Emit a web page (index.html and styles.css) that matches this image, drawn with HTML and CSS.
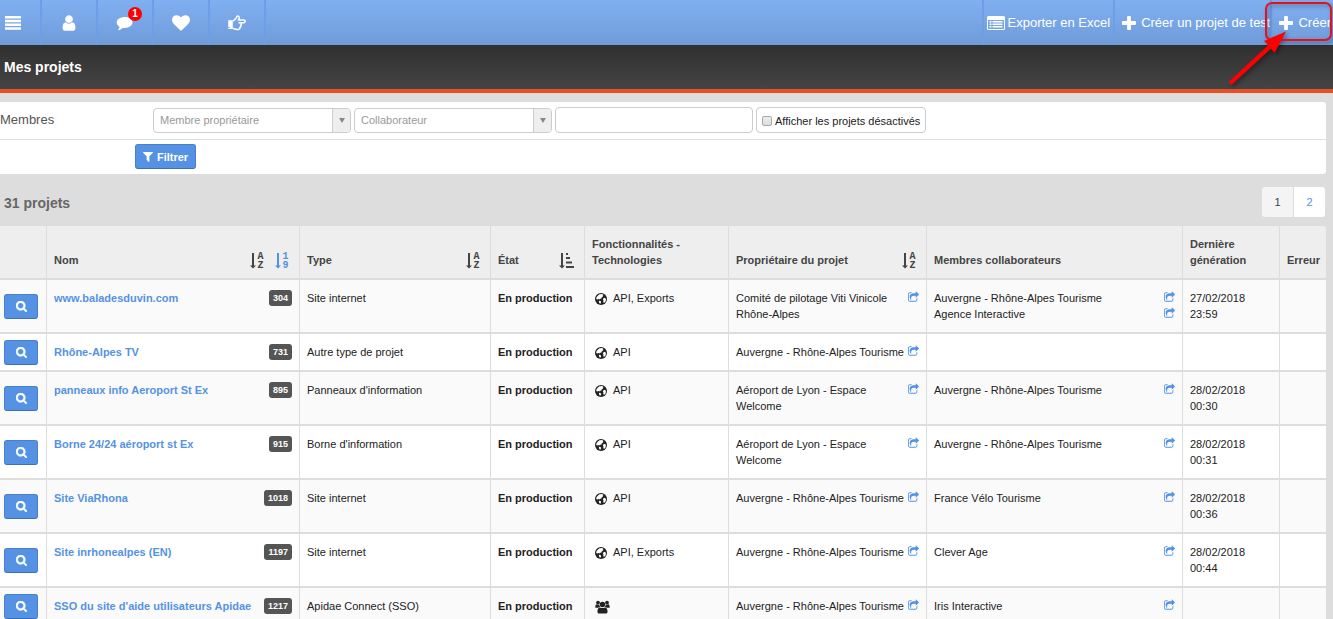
FILE: index.html
```html
<!DOCTYPE html>
<html lang="fr">
<head>
<meta charset="UTF-8">
<meta name="viewport" content="width=device-width, initial-scale=1">
<title>Mes projets</title>
<link rel="stylesheet" href="styles.css">
</head>
<body>
  <!-- Icon set -->
  <svg class="sprite" aria-hidden="true">
    <symbol id="i-menu" viewBox="0 0 16 14"><path d="M0 0h16v2.500H0zM0 3.700h16v2.500H0zM0 7.500h16V10H0zM0 11.300h16v2.500H0z"/></symbol>
    <symbol id="i-user" viewBox="0 0 1792 1792"><path d="M1536 1399q0 109-62.500 187t-150.500 78h-854q-88 0-150.500-78t-62.500-187q0-85 8.500-160.500t31.500-152 58.500-131 94-89 134.500-34.500q131 128 313 128t313-128q76 0 134.500 34.500t94 89 58.500 131 31.500 152 8.500 160.500zm-256-887q0 159-112.500 271.500t-271.500 112.500-271.500-112.500-112.500-271.500 112.500-271.500 271.500-112.500 271.500 112.500 112.500 271.500z"/></symbol>
    <symbol id="i-comment" viewBox="0 0 18 18"><path d="M9 3c4.600 0 7.500 2.300 7.500 5.300s-3 5.600-7.500 5.600c-.8 0-1.500-.1-2.200-.2-1.400 1.300-2.900 2.200-5.100 2.500 1-1 1.600-2 1.800-3.500C1.600 11.500.700 10.200.700 8.500.700 5.300 4.400 3 9 3z"/></symbol>
    <symbol id="i-heart" viewBox="0 0 1792 1792"><path d="M896 1664q-26 0-44-18l-624-602q-10-8-27.500-26t-55.500-65.500-68-97.500-53.500-121-23.500-138q0-220 127-344t351-124q62 0 126.500 21.500t120 58 95.500 68.500 76 68q36-36 76-68t95.500-68.500 120-58 126.500-21.500q224 0 351 124t127 344q0 221-229 450l-623 600q-18 18-44 18z"/></symbol>
    <symbol id="i-hand" viewBox="0 0 18 16"><path d="M.3 5.200h4.500v8.900H.3zM1.700 12.400a.6.600 0 1 0 0 .1z" fill-rule="evenodd"/><path d="M4.800 5.900c1.200 0 2.400-1.700 3.300-2.800.6-.8.500-2.200 1.500-2.200 1.700 0 2.100 1.800 1 4.100h5.200c1.900 0 1.900 2.700 0 2.700h-3c1 .8.900 2-.1 2.500.5.900.1 1.900-.8 2.300.3 1.300-.5 2-1.900 2-2.200 0-3.300-1.100-5.200-1.100M12.500 7.700h-2" fill="none" stroke="currentColor" stroke-width="1.500"/></symbol>
    <symbol id="i-list" viewBox="0 0 18 14"><path fill-rule="evenodd" d="M1.500 0h15Q18 0 18 1.500v11q0 1.500-1.500 1.500h-15Q0 14 0 12.500v-11Q0 0 1.500 0zM1 4v8.500q0 .5.500.5h15q.5 0 .5-.5V4z"/><path d="M2.500 5h2v1.500h-2zM5.500 5h10v1.500h-10zM2.500 7.500h2V9h-2zM5.500 7.500h10V9h-10zM2.500 10h2v1.500h-2zM5.500 10h10v1.500h-10z"/></symbol>
    <symbol id="i-plus" viewBox="192 128 1408 1408"><path d="M1600 736v192q0 40-28 68t-68 28h-416v416q0 40-28 68t-68 28h-192q-40 0-68-28t-28-68v-416h-416q-40 0-68-28t-28-68v-192q0-40 28-68t68-28h416v-416q0-40 28-68t68-28h192q40 0 68 28t28 68v416h416q40 0 68 28t28 68z"/></symbol>
    <symbol id="i-filter" viewBox="192 256 1408 1408"><path d="M1595 295q17 41-14 70l-493 493v742q0 42-39 59-13 5-25 5-27 0-45-19l-256-256q-19-19-19-45v-486l-493-493q-31-29-14-70 17-39 59-39h1280q42 0 59 39z"/></symbol>
    <symbol id="i-search" viewBox="64 128 1664 1664"><path stroke="currentColor" stroke-width="80" d="M1216 832q0-185-131.500-316.500t-316.500-131.500-316.500 131.500-131.500 316.500 131.500 316.500 316.500 131.500 316.500-131.500 131.500-316.500zm512 832q0 52-38 90t-90 38q-54 0-90-38l-343-342q-179 124-399 124-143 0-273.500-55.500t-225-150-150-225-55.500-273.500 55.500-273.500 150-225 225-150 273.500-55.500 273.500 55.500 225 150 150 225 55.500 273.500q0 220-124 399l343 343q37 37 37 90z"/></symbol>
    <symbol id="i-share" viewBox="64 64 1664 1536"><path d="M1472 989v259q0 119-84.500 203.500t-203.500 84.500h-832q-119 0-203.500-84.500t-84.500-203.500v-832q0-119 84.500-203.500t203.500-84.500h255q13 0 22.500 9.500t9.500 22.500q0 27-26 32-77 26-133 60-10 4-16 4h-112q-66 0-113 47t-47 113v832q0 66 47 113t113 47h832q66 0 113-47t47-113v-214q0-19 18-29 28-13 54-37 16-16 35-8 21 9 21 29zm237-496l-384 384q-18 19-45 19-12 0-25-5-39-17-39-59v-192h-160q-323 0-438 131-119 137-74 473 3 23-20 34-8 2-12 2-16 0-26-13-10-14-21-31t-39.500-68.500-49.500-99.500-38.500-114-17.500-122q0-49 3.500-91t14-90 28-88 47-81.500 68.500-74 94.500-61.500 124.500-48.500 159.500-30.500 196.500-11h160v-192q0-42 39-59 13-5 25-5 26 0 45 19l384 384q19 19 19 45t-19 45z"/></symbol>
    <symbol id="i-globe" viewBox="0 0 12 12"><circle cx="6" cy="6" r="6"/><path fill="#fff" d="M4.500 1.300 7.300 1l1.200 1.200-.8.600.2 1-1.300.6-.4 1.300-1.300.1-.4.800-1.100-.6-.9.500L1.200 6l.4-2L3 2.400zM9 4.700l1.500.5.500 1.500-.6 2-1.500 1.300-.7-1.500.3-1.300-.7-1zM3.800 7.700l1.700.3.700 1-.8 1.800-1.200-.7z"/></symbol>
    <symbol id="i-users" viewBox="0 0 16 14"><circle cx="3.200" cy="2.300" r="2"/><circle cx="12.800" cy="2.300" r="2"/><circle cx="8" cy="4.400" r="2.900"/><path d="M.3 7.500C.3 5.500.8 4 1.800 4c.8.600 2 .6 2.700.2.100 1.200.5 2 1.100 2.700-1 0-1.800.4-2.400 1H1.500C.8 7.900.3 7.900.3 7.500zM15.700 7.500c0-2-.5-3.500-1.500-3.500-.8.600-2 .6-2.700.2-.1 1.200-.5 2-1.100 2.700 1 0 1.800.4 2.400 1h1.700c.7 0 1.200 0 1.200-.4zM5.300 7.400c1.600 1 3.800 1 5.400 0 1.800 0 2.700 1.800 2.700 4.600 0 1.200-.8 1.900-1.900 1.900h-7c-1.100 0-1.900-.7-1.900-1.900 0-2.800.9-4.600 2.700-4.600z"/></symbol>
    <symbol id="i-down" viewBox="0 0 6 18"><path d="M2 1h2v12.500h2l-3 3-3-3h2z"/></symbol>
    <symbol id="i-amount" viewBox="0 0 15 18"><path d="M2 1h2v12.500h2l-3 3-3-3h2zM7 1h2v2H7zM7 5h4v2H7zM7 9.500h6v2H7zM7 14h8v2H7z"/></symbol>
  </svg>

  <header class="topbar">
    <nav class="nav-left">
      <button class="nav-icon nav-menu" aria-label="Menu"><svg class="ico-menu"><use href="#i-menu"/></svg></button>
      <a class="nav-icon" href="#" aria-label="Profil"><svg class="ico-nav"><use href="#i-user"/></svg></a>
      <a class="nav-icon" href="#" aria-label="Messages"><svg class="ico-nav"><use href="#i-comment"/></svg><span class="count">1</span></a>
      <a class="nav-icon" href="#" aria-label="Favoris"><svg class="ico-nav"><use href="#i-heart"/></svg></a>
      <a class="nav-icon" href="#" aria-label="Aide"><svg class="ico-nav"><use href="#i-hand"/></svg></a>
    </nav>
    <nav class="nav-right">
      <a class="action" href="#"><svg class="ico-list"><use href="#i-list"/></svg>Exporter en Excel</a>
      <a class="action action-test" href="#"><svg class="ico-plus"><use href="#i-plus"/></svg>Créer un projet de test</a>
      <a class="action action-create" href="#"><svg class="ico-plus"><use href="#i-plus"/></svg>Créer</a>
    </nav>
    <!-- Arrow pointing at the create action -->
    <svg class="callout" viewBox="0 0 108 90" aria-hidden="true">
      <rect x="41" y="3" width="65" height="37" rx="6" fill="none" stroke="#e8101c" stroke-width="2"/>
      <path d="M6.300 85 45.800 48.800l3.900 4L61 31.500 39 41l4.200 4.300L3.500 82z" fill="#f00"/>
    </svg>
  </header>

  <div class="title-bar"><h1>Mes projets</h1></div>

  <main>
    <form class="filters">
      <div class="filter-row">
        <span class="filter-label">Membres</span>
        <div class="fields">
          <div class="select">
            <select aria-label="Membre propriétaire"><option>Membre propriétaire</option></select>
          </div>
          <div class="select">
            <select aria-label="Collaborateur"><option>Collaborateur</option></select>
          </div>
          <input class="text" type="text" aria-label="Recherche">
          <label class="check"><input type="checkbox">Afficher les projets désactivés</label>
        </div>
      </div>
      <div class="filter-row filter-submit">
        <button class="btn btn-filter" type="button"><svg class="ico-filter"><use href="#i-filter"/></svg>Filtrer</button>
      </div>
    </form>

    <div class="list-head">
      <h2>31 projets</h2>
      <nav class="pages"><a class="current" href="#">1</a><a href="#">2</a></nav>
    </div>

    <table class="projects">
      <colgroup>
        <col class="c-view"><col class="c-name"><col class="c-type"><col class="c-state"><col class="c-tech"><col class="c-owner"><col><col class="c-date"><col class="c-error">
      </colgroup>
      <thead>
        <tr>
          <th></th>
          <th><div class="split">Nom<span class="sorts"><button aria-label="Trier par nom"><svg class="ico-down"><use href="#i-down"/></svg><span class="glyphs">A<br>Z</span></button><button class="active" aria-label="Trier par numéro"><svg class="ico-down"><use href="#i-down"/></svg><span class="glyphs">1<br>9</span></button></span></div></th>
          <th><div class="split">Type<span class="sorts"><button aria-label="Trier par type"><svg class="ico-down"><use href="#i-down"/></svg><span class="glyphs">A<br>Z</span></button></span></div></th>
          <th><div class="split">État<span class="sorts"><button aria-label="Trier par état"><svg class="ico-sort"><use href="#i-amount"/></svg></button></span></div></th>
          <th>Fonctionnalités - Technologies</th>
          <th><div class="split">Propriétaire du projet<span class="sorts"><button aria-label="Trier par propriétaire"><svg class="ico-down"><use href="#i-down"/></svg><span class="glyphs">A<br>Z</span></button></span></div></th>
          <th>Membres collaborateurs</th>
          <th>Dernière génération</th>
          <th>Erreur</th>
        </tr>
      </thead>
      <tbody>
        <tr>
          <td class="view"><button class="btn" aria-label="Voir"><svg class="ico-search"><use href="#i-search"/></svg></button></td>
          <td><div class="split"><a class="name" href="#">www.baladesduvin.com</a><span class="id">304</span></div></td>
          <td>Site internet</td>
          <td class="state">En production</td>
          <td><div class="tech"><svg class="ico-globe"><use href="#i-globe"/></svg>API, Exports</div></td>
          <td><div class="split">Comité de pilotage Viti Vinicole Rhône-Alpes<a href="#" aria-label="Ouvrir"><svg class="ico-share"><use href="#i-share"/></svg></a></div></td>
          <td>
            <div class="split">Auvergne - Rhône-Alpes Tourisme<a href="#" aria-label="Ouvrir"><svg class="ico-share"><use href="#i-share"/></svg></a></div>
            <div class="split">Agence Interactive<a href="#" aria-label="Ouvrir"><svg class="ico-share"><use href="#i-share"/></svg></a></div>
          </td>
          <td>27/02/2018 23:59</td>
          <td></td>
        </tr>
        <tr>
          <td class="view"><button class="btn" aria-label="Voir"><svg class="ico-search"><use href="#i-search"/></svg></button></td>
          <td><div class="split"><a class="name" href="#">Rhône-Alpes TV</a><span class="id">731</span></div></td>
          <td>Autre type de projet</td>
          <td class="state">En production</td>
          <td><div class="tech"><svg class="ico-globe"><use href="#i-globe"/></svg>API</div></td>
          <td><div class="split">Auvergne - Rhône-Alpes Tourisme<a href="#" aria-label="Ouvrir"><svg class="ico-share"><use href="#i-share"/></svg></a></div></td>
          <td></td>
          <td></td>
          <td></td>
        </tr>
        <tr>
          <td class="view"><button class="btn" aria-label="Voir"><svg class="ico-search"><use href="#i-search"/></svg></button></td>
          <td><div class="split"><a class="name" href="#">panneaux info Aeroport St Ex</a><span class="id">895</span></div></td>
          <td>Panneaux d'information</td>
          <td class="state">En production</td>
          <td><div class="tech"><svg class="ico-globe"><use href="#i-globe"/></svg>API</div></td>
          <td><div class="split">Aéroport de Lyon - Espace Welcome<a href="#" aria-label="Ouvrir"><svg class="ico-share"><use href="#i-share"/></svg></a></div></td>
          <td><div class="split">Auvergne - Rhône-Alpes Tourisme<a href="#" aria-label="Ouvrir"><svg class="ico-share"><use href="#i-share"/></svg></a></div></td>
          <td>28/02/2018 00:30</td>
          <td></td>
        </tr>
        <tr>
          <td class="view"><button class="btn" aria-label="Voir"><svg class="ico-search"><use href="#i-search"/></svg></button></td>
          <td><div class="split"><a class="name" href="#">Borne 24/24 aéroport st Ex</a><span class="id">915</span></div></td>
          <td>Borne d'information</td>
          <td class="state">En production</td>
          <td><div class="tech"><svg class="ico-globe"><use href="#i-globe"/></svg>API</div></td>
          <td><div class="split">Aéroport de Lyon - Espace Welcome<a href="#" aria-label="Ouvrir"><svg class="ico-share"><use href="#i-share"/></svg></a></div></td>
          <td><div class="split">Auvergne - Rhône-Alpes Tourisme<a href="#" aria-label="Ouvrir"><svg class="ico-share"><use href="#i-share"/></svg></a></div></td>
          <td>28/02/2018 00:31</td>
          <td></td>
        </tr>
        <tr>
          <td class="view"><button class="btn" aria-label="Voir"><svg class="ico-search"><use href="#i-search"/></svg></button></td>
          <td><div class="split"><a class="name" href="#">Site ViaRhona</a><span class="id">1018</span></div></td>
          <td>Site internet</td>
          <td class="state">En production</td>
          <td><div class="tech"><svg class="ico-globe"><use href="#i-globe"/></svg>API</div></td>
          <td><div class="split">Auvergne - Rhône-Alpes Tourisme<a href="#" aria-label="Ouvrir"><svg class="ico-share"><use href="#i-share"/></svg></a></div></td>
          <td><div class="split">France Vélo Tourisme<a href="#" aria-label="Ouvrir"><svg class="ico-share"><use href="#i-share"/></svg></a></div></td>
          <td>28/02/2018 00:36</td>
          <td></td>
        </tr>
        <tr>
          <td class="view"><button class="btn" aria-label="Voir"><svg class="ico-search"><use href="#i-search"/></svg></button></td>
          <td><div class="split"><a class="name" href="#">Site inrhonealpes (EN)</a><span class="id">1197</span></div></td>
          <td>Site internet</td>
          <td class="state">En production</td>
          <td><div class="tech"><svg class="ico-globe"><use href="#i-globe"/></svg>API, Exports</div></td>
          <td><div class="split">Auvergne - Rhône-Alpes Tourisme<a href="#" aria-label="Ouvrir"><svg class="ico-share"><use href="#i-share"/></svg></a></div></td>
          <td><div class="split">Clever Age<a href="#" aria-label="Ouvrir"><svg class="ico-share"><use href="#i-share"/></svg></a></div></td>
          <td>28/02/2018 00:44</td>
          <td></td>
        </tr>
        <tr>
          <td class="view"><button class="btn" aria-label="Voir"><svg class="ico-search"><use href="#i-search"/></svg></button></td>
          <td><div class="split"><a class="name" href="#">SSO du site d'aide utilisateurs Apidae</a><span class="id">1217</span></div></td>
          <td>Apidae Connect (SSO)</td>
          <td class="state">En production</td>
          <td><div class="tech"><svg class="ico-users"><use href="#i-users"/></svg></div></td>
          <td><div class="split">Auvergne - Rhône-Alpes Tourisme<a href="#" aria-label="Ouvrir"><svg class="ico-share"><use href="#i-share"/></svg></a></div></td>
          <td><div class="split">Iris Interactive<a href="#" aria-label="Ouvrir"><svg class="ico-share"><use href="#i-share"/></svg></a></div></td>
          <td></td>
          <td></td>
        </tr>
      </tbody>
    </table>
  </main>
</body>
</html>
```
FILE: styles.css
```css
* {
  box-sizing: border-box;
}

body {
  margin: 0;
  background: #ddd;
  color: #222;
  font-family: "Liberation Sans", Arial, sans-serif;
  font-size: 11px;
  line-height: 16px;
}

h1,
h2 {
  margin: 0;
  font-size: 14px;
}

a {
  color: #5592e4;
  text-decoration: none;
}

button,
input,
select {
  font: inherit;
}

svg {
  display: block;
  flex: none;
  fill: currentColor;
}

.sprite {
  position: absolute;
  width: 0;
  height: 0;
}

/* Top bar */
.topbar {
  position: relative;
  display: flex;
  justify-content: space-between;
  height: 45px;
  background: linear-gradient(#80aff2, #6f9cd8);
}

.nav-left,
.nav-right {
  display: flex;
}

.nav-icon {
  position: relative;
  display: flex;
  align-items: center;
  justify-content: center;
  width: 56px;
  padding: 0;
  border: 0;
  border-right: 2px solid #6c9fe8;
  background: none;
  color: #fff;
}

.nav-menu {
  width: 42px;
  padding-right: 14px;
}

.ico-nav {
  width: 18px;
  height: 18px;
}

.ico-menu {
  width: 16px;
  height: 14px;
}

/* Unread messages */
.count {
  position: absolute;
  top: 7px;
  right: 10px;
  width: 14px;
  height: 14px;
  border-radius: 50%;
  background: #f00;
  font-size: 10px;
  font-weight: bold;
  line-height: 14px;
  text-align: center;
}

.action {
  display: flex;
  align-items: center;
  gap: 3px;
  padding: 0 3px;
  border-left: 2px solid #6c9fe8;
  color: #fff;
  font-size: 13px;
  white-space: nowrap;
}

.action-test,
.action-create {
  gap: 5px;
  padding: 0 0 0 7px;
}

.action-create {
  padding-right: 2px;
}

.ico-list {
  width: 18px;
  height: 14px;
}

.ico-plus {
  width: 14px;
  height: 14px;
}

.callout {
  position: absolute;
  top: 0;
  right: 0;
  z-index: 1;
  width: 108px;
  height: 90px;
  filter: drop-shadow(2px 2px 2px rgba(0, 0, 0, 0.4));
  pointer-events: none;
}

.title-bar {
  padding: 14px 4px;
  border-bottom: 4px solid #e94e24;
  background: linear-gradient(#303030, #444);
  color: #fff;
}

main {
  padding: 9px 7px 0 0;
}

/* Filters */
.filters {
  border-radius: 0 3px 3px 0;
  background: #fff;
}

.filter-row {
  display: flex;
  padding: 5px 0 6px;
}

.filter-submit {
  padding: 4px 0 5px 135px;
  border-top: 1px solid #ddd;
}

.filter-label {
  width: 153px;
  padding-top: 5px;
  color: #555;
  font-size: 13px;
}

.fields {
  display: flex;
  align-items: flex-end;
  gap: 3px;
}

.select {
  position: relative;
}

.select::before {
  content: "";
  position: absolute;
  top: 1px;
  right: 1px;
  bottom: 1px;
  width: 17px;
  border-left: 1px solid #ccc;
  border-radius: 0 3px 3px 0;
  background: #eee;
  pointer-events: none;
}

.select::after {
  content: "";
  position: absolute;
  top: 10px;
  right: 6px;
  border: 3px solid transparent;
  border-top: 5px solid #888;
  border-bottom: 0;
  pointer-events: none;
}

.select select {
  display: block;
  width: 198px;
  height: 25px;
  padding: 0 20px 1px 6px;
  border: 1px solid #ccc;
  border-radius: 4px;
  appearance: none;
  background: #fff;
  color: #999;
}

.text {
  width: 198px;
  height: 26px;
  padding: 0 7px;
  border: 1px solid #ccc;
  border-radius: 4px;
}

.check {
  display: flex;
  align-items: center;
  gap: 3px;
  height: 26px;
  padding: 2px 5px 0;
  border: 1px solid #ccc;
  border-radius: 4px;
}

.check input {
  width: 10px;
  height: 10px;
  margin: 0;
  border: 1px solid #aaa;
  border-radius: 2px;
  appearance: none;
  background: linear-gradient(#eee, #ddd);
}

.check input:checked {
  background: #5592e4;
}

.btn {
  display: flex;
  align-items: center;
  justify-content: center;
  width: 34px;
  height: 25px;
  padding: 0;
  border: 1px solid #4a80cb;
  border-bottom-color: #3f70b5;
  border-radius: 3px;
  background: #5592e4;
  color: #fff;
  cursor: pointer;
}

.btn-filter {
  gap: 4px;
  width: 61px;
  font-weight: bold;
}

.ico-filter {
  width: 10px;
  height: 10px;
}

.ico-search {
  width: 11px;
  height: 11px;
}

/* Count and pagination */
.list-head {
  display: flex;
  align-items: center;
  justify-content: space-between;
  padding: 13px 1px 9px 4px;
  color: #666;
}

.list-head h2 {
  padding-top: 2px;
}

.pages {
  display: flex;
  gap: 1px;
}

.pages a {
  width: 31px;
  border-radius: 0 3px 3px 0;
  background: #fff;
  line-height: 30px;
  text-align: center;
}

.pages .current {
  border-radius: 3px 0 0 3px;
  background: #f4f4f4;
  color: #345;
}

/* Projects table */
.projects {
  width: 100%;
  border-spacing: 0;
  table-layout: fixed;
}

.c-view { width: 46px; }
.c-name { width: 253px; }
.c-type { width: 191px; }
.c-state { width: 94px; }
.c-tech { width: 144px; }
.c-owner { width: 198px; }
.c-date { width: 97px; }
.c-error { width: 47px; }

th,
td {
  padding: 10px 7px;
  border-bottom: 2px solid #ddd;
  border-left: 1px solid #ddd;
  background: #fff;
  text-align: left;
  vertical-align: top;
}

th {
  background: #eee;
  color: #444;
  vertical-align: bottom;
}

th:first-child,
td:first-child {
  border-left: 0;
}

th:last-child {
  border-top-right-radius: 3px;
}

tbody tr:nth-child(odd) td {
  background: #fafafa;
}

td.view {
  padding: 0 4px;
  vertical-align: middle;
}

.state,
.name {
  font-weight: bold;
}

.split {
  display: flex;
  justify-content: space-between;
  gap: 3px;
}

.sorts {
  display: flex;
  gap: 11px;
  padding-right: 3px;
}

.sorts button {
  display: flex;
  gap: 1px;
  height: 16px;
  padding: 0;
  border: 0;
  background: none;
  color: #444;
  cursor: pointer;
}

.sorts .active {
  color: #5592e4;
}

.ico-down {
  width: 6px;
  height: 18px;
}

.ico-sort {
  width: 15px;
  height: 18px;
}

.glyphs {
  width: 7px;
  font-family: "Liberation Mono", monospace;
  font-size: 10px;
  font-weight: bold;
  line-height: 9px;
  text-align: center;
}

.id {
  padding: 0 4px;
  border-radius: 3px;
  background: #555;
  color: #fff;
  font-size: 9px;
  font-weight: bold;
}

.tech {
  display: flex;
  align-items: center;
  gap: 6px;
  height: 16px;
  padding: 1px 0 0 3px;
  line-height: 15px;
}

.ico-globe {
  width: 12px;
  height: 12px;
}

.ico-users {
  width: 15px;
  height: 14px;
}

.ico-share {
  width: 11px;
  height: 14px;
}
```
